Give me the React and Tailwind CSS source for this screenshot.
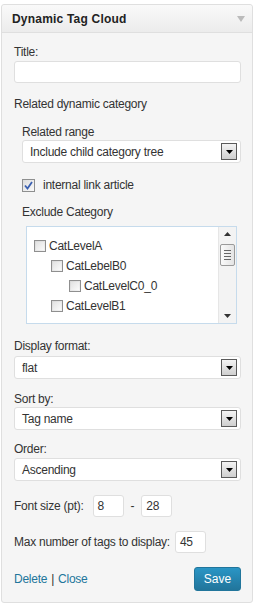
const font = { fontFamily: '"Liberation Sans", Arial, sans-serif' };

function Arrow() {
  return (
    <div className="w-[16px] h-[17px] border border-[#5a5a5a] bg-gradient-to-b from-[#f4f4f4] to-[#cfcfcf] flex items-center justify-center">
      <svg width="7" height="4" viewBox="0 0 7 4">
        <path d="M0 0h7L3.5 4z" fill="#000" />
      </svg>
    </div>
  );
}

function Select({ value, className = "" }) {
  return (
    <div className={"h-[23px] bg-white border border-[#dfdfdf] rounded-[3px] flex items-center justify-between pl-[7px] pr-[3px] " + className}>
      <span>{value}</span>
      <Arrow />
    </div>
  );
}

function Box() {
  return (
    <span className="w-[12px] h-[12px] border border-[#8f8f8f] bg-gradient-to-br from-[#d8d8d8] to-[#f4f4f4] shrink-0 flex items-center justify-center">
      <span className="w-[8px] h-[8px] bg-gradient-to-br from-[#e2e2e2] to-[#fafafa]" />
    </span>
  );
}

function Item({ label, indent }) {
  return (
    <div className={"h-[20px] flex items-center gap-[3px] " + indent}>
      <Box />
      <span>{label}</span>
    </div>
  );
}

function Label({ children, className = "" }) {
  return <div className={"h-[16px] leading-[16px] " + className}>{children}</div>;
}

export default function App() {
  return (
    <div className="bg-white min-h-[609px] pt-[4px] pl-[1px]" style={font}>
      <div className="w-[252px] border border-[#dfdfdf] rounded-[3px] bg-[#f5f5f5] text-[12px] text-[#333] tracking-[-0.25px]">
        <div className="h-[28px] border-b border-[#dfdfdf] bg-gradient-to-b from-[#f9f9f9] to-[#ececec] flex items-center justify-between pl-[10px] pr-[7px] rounded-t-[3px]">
          <span className="font-bold text-[12px] tracking-[0.2px] text-[#222]">Dynamic Tag Cloud</span>
          <svg width="8" height="6" viewBox="0 0 8 6">
            <path d="M0 0h8L4 6z" fill="#bbb" />
          </svg>
        </div>

        <div className="pl-[12px] pr-[11px] pt-[11px] pb-[11px]">
          <Label>Title:</Label>
          <div className="mt-[1px] h-[22px] bg-white border border-[#dfdfdf] rounded-[3px]" />

          <Label className="mt-[13px]">Related dynamic category</Label>

          <div className="pl-[8px]">
            <Label className="mt-[12px]">Related range</Label>
            <Select value="Include child category tree" />

            <div className="mt-[14px] h-[16px] flex items-center gap-[8px]">
              <span className="w-[13px] h-[13px] border border-[#8e8f8f] bg-gradient-to-br from-[#dcdcdc] to-[#fafafa] flex items-center justify-center">
                <svg width="9" height="9" viewBox="0 0 9 9">
                  <path d="M1 4.5l2.5 3L8 1" stroke="#3a5fb0" strokeWidth="1.8" fill="none" />
                </svg>
              </span>
              <span>internal link article</span>
            </div>

            <Label className="mt-[11px]">Exclude Category</Label>

            <div className="mt-[6px] ml-[4px] h-[98px] w-[211px] bg-white border border-[#c6dbec] flex">
              <div className="flex-1 pt-[9px] pl-[7px]">
                <Item label="CatLevelA" indent="" />
                <Item label="CatLebelB0" indent="pl-[17px]" />
                <Item label="CatLevelC0_0" indent="pl-[35px]" />
                <Item label="CatLevelB1" indent="pl-[17px]" />
              </div>
              <div className="w-[18px] bg-[#f3f3f3] border-l border-[#e6e6e6] flex flex-col items-center justify-between py-[5px]">
                <div className="flex flex-col items-center gap-[8px]">
                  <svg width="7" height="4" viewBox="0 0 7 4">
                    <path d="M3.5 0L7 4H0z" fill="#333" />
                  </svg>
                  <div className="w-[15px] h-[22px] border border-[#9a9a9a] rounded-[2px] bg-gradient-to-r from-[#fafafa] to-[#e4e4e4] flex flex-col items-center justify-center gap-[2px]">
                    <span className="w-[7px] h-[1px] bg-[#666]" />
                    <span className="w-[7px] h-[1px] bg-[#666]" />
                    <span className="w-[7px] h-[1px] bg-[#666]" />
                    <span className="w-[7px] h-[1px] bg-[#666]" />
                  </div>
                </div>
                <svg width="7" height="4" viewBox="0 0 7 4">
                  <path d="M0 0h7L3.5 4z" fill="#333" />
                </svg>
              </div>
            </div>
          </div>

          <Label className="mt-[14px]">Display format:</Label>
          <Select value="flat" className="mt-[2px]" />

          <Label className="mt-[12px]">Sort by:</Label>
          <Select value="Tag name" />

          <Label className="mt-[11px]">Order:</Label>
          <Select value="Ascending" className="mt-[1px]" />

          <div className="mt-[14px] flex items-center h-[22px]">
            <span>Font size (pt):</span>
            <div className="ml-[9px] w-[31px] h-[22px] bg-white border border-[#dfdfdf] rounded-[3px] flex items-center pl-[4px]">8</div>
            <span className="mx-[7px]">-</span>
            <div className="w-[31px] h-[22px] bg-white border border-[#dfdfdf] rounded-[3px] flex items-center pl-[4px]">28</div>
          </div>

          <div className="mt-[14px] flex items-center h-[22px]">
            <span>Max number of tags to display:</span>
            <div className="ml-[5px] w-[31px] h-[22px] bg-white border border-[#dfdfdf] rounded-[3px] flex items-center pl-[4px]">45</div>
          </div>

          <div className="mt-[14px] flex items-center justify-between h-[24px]">
            <div className="text-[#21759b]">
              <span>Delete</span>
              <span className="text-[#333] mx-[4px]">|</span>
              <span>Close</span>
            </div>
            <button className="w-[47px] h-[24px] rounded-[3px] border border-[#21759b] bg-gradient-to-b from-[#2a95c5] to-[#21759b] text-white text-[12px] tracking-normal">
              Save
            </button>
          </div>
        </div>
      </div>
    </div>
  );
}
